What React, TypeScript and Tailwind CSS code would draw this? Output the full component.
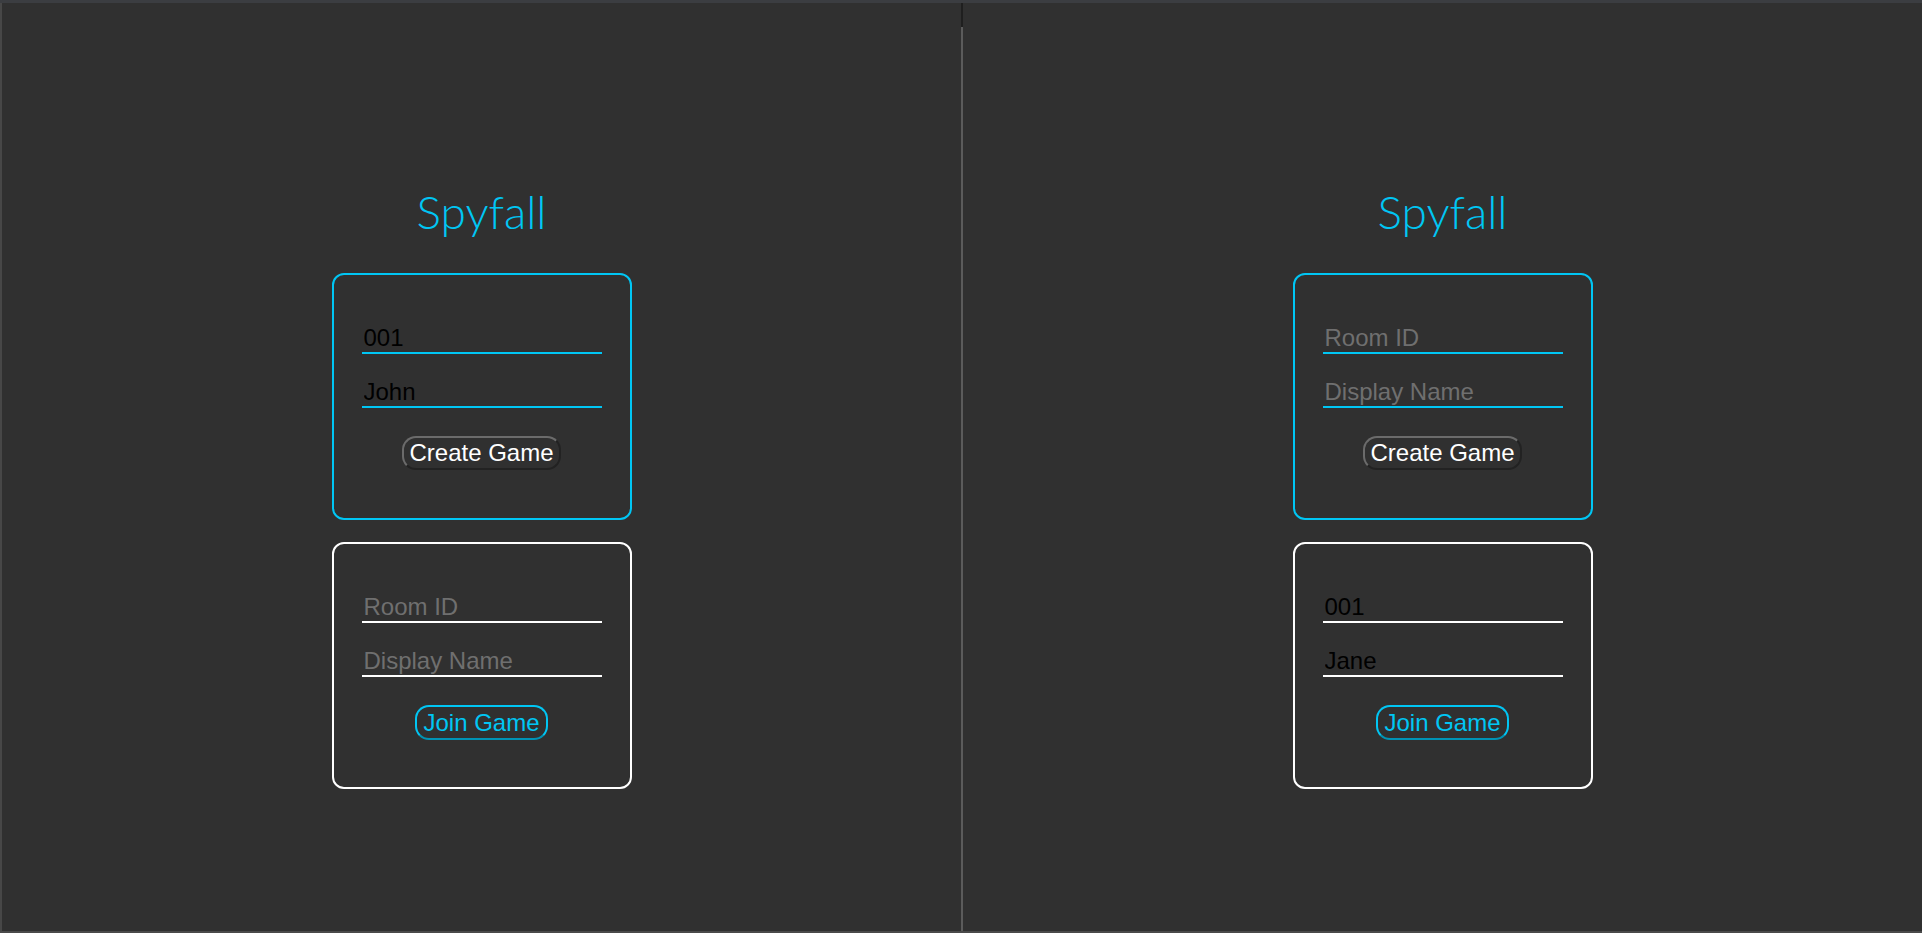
import React from "react";

type Panel = {
  roomId: string;
  name: string;
};

const Card = ({
  accent,
  values,
  label,
}: {
  accent: "cyan" | "white";
  values: Panel;
  label: string;
}) => {
  const isCreate = accent === "cyan";
  return (
    <div
      className={`flex h-[247px] w-[300px] flex-col items-center rounded-xl border-2 pt-[49px] ${
        isCreate ? "border-[#00c6f4]" : "border-white"
      }`}
    >
      <input
        type="text"
        defaultValue={values.roomId}
        placeholder="Room ID"
        className={`h-[30px] w-[240px] border-b-2 bg-transparent pl-[2px] text-[24px] leading-[28px] text-black placeholder:text-[#6f6f6f] outline-none ${
          isCreate ? "border-[#00c6f4]" : "border-white"
        }`}
      />
      <input
        type="text"
        defaultValue={values.name}
        placeholder="Display Name"
        className={`mt-[24px] h-[30px] w-[240px] border-b-2 bg-transparent pl-[2px] text-[24px] leading-[28px] text-black placeholder:text-[#6f6f6f] outline-none ${
          isCreate ? "border-[#00c6f4]" : "border-white"
        }`}
      />
      {isCreate ? (
        <button className="mt-[28px] h-[34px] rounded-[14px] border-2 border-t-[#6b6b6b] border-l-[#6b6b6b] border-r-[#222222] border-b-[#222222] bg-transparent px-[5px] text-[24px] leading-[28px] text-white">
          {label}
        </button>
      ) : (
        <button className="mt-[28px] h-[35px] rounded-[14px] border-2 border-[#00c6f4] border-b-[#0093b5] bg-transparent px-[6px] text-[24px] leading-[28px] text-[#00c6f4]">
          {label}
        </button>
      )}
    </div>
  );
};

const Window = ({ create, join }: { create: Panel; join: Panel }) => {
  return (
    <div className="flex h-full flex-1 flex-col items-center bg-[#303030] pt-[179px]">
      <h1 className="h-[60px] font-['Lato',sans-serif] text-[46px] font-light leading-[60px] text-[#00c6f4]">
        Spyfall
      </h1>
      <div className="mt-[31px]">
        <Card accent="cyan" values={create} label="Create Game" />
      </div>
      <div className="mt-[22px]">
        <Card accent="white" values={join} label="Join Game" />
      </div>
    </div>
  );
};

export default function App() {
  return (
    <div
      className="flex h-[933px] w-full flex-col overflow-hidden bg-[#303030]"
      style={{ fontFamily: '"Liberation Sans", Arial, sans-serif' }}
    >
      <div className="h-[3px] w-full bg-[#3b3d41]" />
      <div className="flex flex-1 flex-row">
        {/* Left window */}
        <div className="flex w-[961px] border-l-2 border-[#474747]">
          <Window create={{ roomId: "001", name: "John" }} join={{ roomId: "", name: "" }} />
        </div>

        {/* Divider */}
        <div className="flex w-[2px] flex-col">
          <div className="h-[24px] bg-[#1f1f1f]" />
          <div className="flex-1 bg-[#5b5b5b]" />
        </div>

        {/* Right window */}
        <div className="flex flex-1">
          <Window create={{ roomId: "", name: "" }} join={{ roomId: "001", name: "Jane" }} />
        </div>
      </div>
      <div className="h-[2px] w-full bg-[#4a4a4a]" />
    </div>
  );
}
